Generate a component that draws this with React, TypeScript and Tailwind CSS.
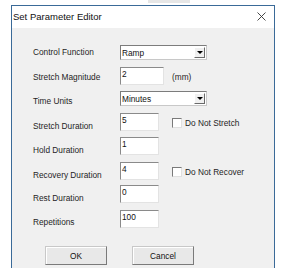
import React from "react";

function Label({ text, pt }: { text: string; pt: string }) {
  return (
    <div className={`w-[87px] shrink-0 leading-[10px] text-[8.3px] text-[#1e1e1e] ${pt}`}>{text}</div>
  );
}

function Input({ value, w }: { value: string; w: string }) {
  return (
    <div
      className={`${w} h-[18px] bg-white border border-t-[#8a8a8a] border-l-[#8a8a8a] border-r-[#e3e3e3] border-b-[#e3e3e3] pl-[1px] pt-[1px] leading-[10px] text-[8.3px] text-[#111]`}
    >
      {value}
    </div>
  );
}

function Select({ value }: { value: string }) {
  return (
    <div className="w-[87px] h-[15px] bg-white border border-t-[#7c7c7c] border-l-[#7c7c7c] border-r-[#c8c8c8] border-b-[#c8c8c8] flex items-center">
      <div className="flex-1 pl-[1px] leading-[10px] text-[8.3px] text-[#111]">{value}</div>
      <div className="w-[11px] h-[11px] mr-[1px] bg-[#f0f0f0] border border-t-white border-l-white border-r-[#6a6a6a] border-b-[#6a6a6a] flex items-center justify-center">
        <div className="w-0 h-0 border-l-[3px] border-r-[3px] border-t-[3px] border-l-transparent border-r-transparent border-t-black" />
      </div>
    </div>
  );
}

function Check({ text }: { text: string }) {
  return (
    <div className="flex items-center ml-[13px] pt-[5px]">
      <div className="w-[10px] h-[10px] bg-white border border-t-[#7a7a7a] border-l-[#7a7a7a] border-r-[#e0e0e0] border-b-[#e0e0e0]" />
      <div className="ml-[3px] leading-[10px] text-[8.3px] text-[#1e1e1e]">{text}</div>
    </div>
  );
}

export default function App() {
  return (
    <div className="w-[283px] h-[268px] bg-white overflow-hidden font-['Liberation_Sans',Arial,sans-serif]">
      <div className="h-[5px] flex">
        <div className="ml-[148px] w-[42px] h-[3px] bg-[#e6e6e6]" />
      </div>
      <div className="ml-[11px] w-[264px] h-[263px] border border-b-0 border-[#3a6a98] flex flex-col">
        <div className="h-[22px] bg-white flex items-center justify-between pl-[1px] pr-[8px] pb-[2px]">
          <div className="text-[9.5px] leading-[11px] text-[#111]">Set Parameter Editor</div>
          <svg width="9" height="9" viewBox="0 0 9 9">
            <path d="M0.5 0.5 L8.5 8.5 M8.5 0.5 L0.5 8.5" stroke="#333" strokeWidth="0.9" />
          </svg>
        </div>
        <div className="flex-1 bg-[#f0f0f0] pl-[21px] pt-[17px] flex flex-col">
          <div className="h-[22px] flex items-start">
            <Label text="Control Function" pt="pt-[2px]" />
            <Select value="Ramp" />
          </div>
          <div className="h-[24px] flex items-start">
            <Label text="Stretch Magnitude" pt="pt-[5px]" />
            <Input value="2" w="w-[44px]" />
            <div className="ml-[8px] pt-[5px] leading-[10px] text-[8.3px] text-[#1e1e1e]">(mm)</div>
          </div>
          <div className="h-[22px] flex items-start">
            <Label text="Time Units" pt="pt-[5px]" />
            <Select value="Minutes" />
          </div>
          <div className="h-[24px] flex items-start">
            <Label text="Stretch Duration" pt="pt-[8px]" />
            <Input value="5" w="w-[39px]" />
            <Check text="Do Not Stretch" />
          </div>
          <div className="h-[25px] flex items-start">
            <Label text="Hold Duration" pt="pt-[8px]" />
            <Input value="1" w="w-[39px]" />
          </div>
          <div className="h-[23px] flex items-start">
            <Label text="Recovery Duration" pt="pt-[8px]" />
            <Input value="4" w="w-[39px]" />
            <Check text="Do Not Recover" />
          </div>
          <div className="h-[25px] flex items-start">
            <Label text="Rest Duration" pt="pt-[8px]" />
            <Input value="0" w="w-[39px]" />
          </div>
          <div className="h-[36px] flex items-start">
            <Label text="Repetitions" pt="pt-[7px]" />
            <Input value="100" w="w-[39px]" />
          </div>
          <div className="flex ml-[12px] gap-[25px]">
            <div className="w-[62px] h-[19px] bg-[#e8e8e8] border border-t-[#c8c8c8] border-l-[#c8c8c8] border-r-[#7a7a7a] border-b-[#7a7a7a] shadow-[inset_1px_1px_0_#ffffff] flex items-center justify-center text-[8.3px] leading-[10px] text-[#111]">
              OK
            </div>
            <div className="w-[62px] h-[19px] bg-[#e8e8e8] border border-t-[#c8c8c8] border-l-[#c8c8c8] border-r-[#7a7a7a] border-b-[#7a7a7a] shadow-[inset_1px_1px_0_#ffffff] flex items-center justify-center text-[8.3px] leading-[10px] text-[#111]">
              Cancel
            </div>
          </div>
        </div>
      </div>
    </div>
  );
}
